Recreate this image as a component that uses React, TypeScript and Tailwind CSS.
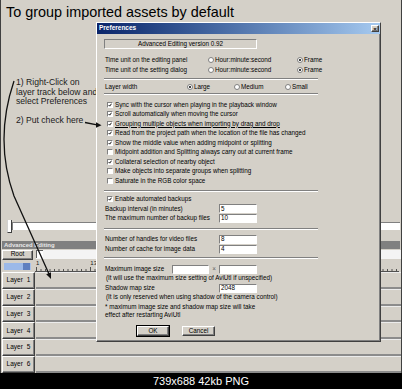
import React from 'react';

const sunken = 'border-t border-l border-t-[#808080] border-l-[#808080] border-r border-b border-r-white border-b-white';
const raised = 'border-t border-l border-t-white border-l-white border-r border-b border-r-[#404040] border-b-[#404040] shadow-[inset_-1px_-1px_0_#808080]';

const Radio = ({ on }: { on?: boolean }) => (
    <span className="w-[6px] h-[6px] rounded-full bg-white border border-[#808080] flex items-center justify-center shrink-0">
        {on && <span className="w-[2px] h-[2px] rounded-full bg-black" />}
    </span>
);

const Check = ({ on }: { on?: boolean }) => (
    <span className={`w-[6px] h-[6px] bg-white flex items-center justify-center shrink-0 ${sunken}`}>
        {on && (
            <svg width="4" height="4" viewBox="0 0 7 7">
                <path d="M1 3.5 L3 5.5 L6.2 1.2" stroke="black" strokeWidth="1.6" fill="none" />
            </svg>
        )}
    </span>
);

const Field = ({ value, w = 'w-[38px]' }: { value?: string; w?: string }) => (
    <span className={`h-[9px] bg-white flex items-center pl-[1px] leading-none ${w} ${sunken}`}>{value}</span>
);

const Sep = () => <div className="w-[214px] h-[2px] border-t border-[#808080] border-b border-b-white" />;

const options: [boolean, string][] = [
    [true, 'Sync with the cursor when playing in the playback window'],
    [true, 'Scroll automatically when moving the cursor'],
    [true, 'Grouping multiple objects when importing by drag and drop'],
    [true, 'Read from the project path when the location of the file has changed'],
    [true, 'Show the middle value when adding midpoint or splitting'],
    [false, 'Midpoint addition and Splitting always carry out at current frame'],
    [true, 'Collateral selection of nearby object'],
    [false, 'Make objects into separate groups when splitting'],
    [false, 'Saturate in the RGB color space'],
];

const ticks = Array.from({ length: 81 }, (_, i) => i);

function Preferences() {
    return (
        <div className="absolute left-[96px] top-[22px] w-[285px] h-[320px] bg-[#d4d0c8] border border-t-white border-l-white border-r-[#404040] border-b-[#404040] shadow-[inset_-1px_-1px_0_#808080] text-[6.3px] leading-none text-black">
            <div className="h-[11px] bg-linear-to-r from-[#0a246a] to-[#a6caf0] flex items-center justify-between pl-[2px] pr-[1px]">
                <span className="text-white font-bold text-[6.5px]">Preferences</span>
                <span className={`w-[8px] h-[7px] bg-[#d4d0c8] flex items-center justify-center text-[6px] font-bold ${raised}`}>×</span>
            </div>

            <div className="pl-[7px] flex flex-col">
                <div className={`mt-[5px] w-[153px] h-[10px] flex items-center justify-center ${sunken}`}>
                    Advanced Editing version 0.92
                </div>

                <div className="mt-[6px] grid grid-cols-[104px_89px_1fr] h-[10px] items-center">
                    <span className="pl-[1px]">Time unit on the editing panel</span>
                    <span className="flex items-center gap-[1px]"><Radio />Hour:minute:second</span>
                    <span className="flex items-center gap-[1px]"><Radio on />Frame</span>
                </div>
                <div className="grid grid-cols-[104px_89px_1fr] h-[10px] items-center">
                    <span className="pl-[1px]">Time unit of the setting dialog</span>
                    <span className="flex items-center gap-[1px]"><Radio />Hour:minute:second</span>
                    <span className="flex items-center gap-[1px]"><Radio on />Frame</span>
                </div>

                <div className="mt-[3px]"><Sep /></div>

                <div className="mt-[2px] grid grid-cols-[83px_47px_51px_1fr] h-[10px] items-center">
                    <span className="pl-[1px]">Layer width</span>
                    <span className="flex items-center gap-[1px]"><Radio on />Large</span>
                    <span className="flex items-center gap-[1px]"><Radio />Medium</span>
                    <span className="flex items-center gap-[1px]"><Radio />Small</span>
                </div>

                <div className="mt-[1px]"><Sep /></div>

                <div className="mt-[5px] flex flex-col">
                    {options.map(([on, label], i) => (
                        <div key={i} className="h-[9.5px] flex items-center gap-[2px] pl-[3px]">
                            <Check on={on} />
                            <span className={i === 2 ? 'underline decoration-black underline-offset-[1px]' : ''}>{label}</span>
                        </div>
                    ))}
                </div>

                <div className="mt-[4.5px]"><Sep /></div>

                <div className="mt-[2.5px] h-[9.5px] flex items-center gap-[2px] pl-[3px]">
                    <Check on />
                    <span>Enable automated backups</span>
                </div>
                <div className="h-[9.5px] grid grid-cols-[115px_1fr] items-center">
                    <span className="pl-[1px]">Backup interval (in minutes)</span>
                    <Field value="5" />
                </div>
                <div className="h-[9.5px] grid grid-cols-[115px_1fr] items-center">
                    <span className="pl-[1px]">The maximum number of backup files</span>
                    <Field value="10" />
                </div>

                <div className="mt-[4.5px]"><Sep /></div>

                <div className="mt-[4.5px] h-[10px] grid grid-cols-[115px_1fr] items-center">
                    <span className="pl-[1px]">Number of handles for video files</span>
                    <Field value="8" />
                </div>
                <div className="h-[10px] grid grid-cols-[115px_1fr] items-center">
                    <span className="pl-[1px]">Number of cache for image data</span>
                    <Field value="4" />
                </div>

                <div className="mt-[3px]"><Sep /></div>

                <div className="mt-[5px] h-[10px] flex items-center">
                    <span className="w-[68px] pl-[1px]">Maximum image size</span>
                    <Field w="w-[37px]" />
                    <span className="w-[10px] text-center text-[#606060]">×</span>
                    <Field />
                </div>
                <div className="h-[9px] flex items-center pl-[2px]">(It will use the maximum size setting of AviUtl if unspecified)</div>
                <div className="h-[10px] grid grid-cols-[115px_1fr] items-center">
                    <span className="pl-[1px]">Shadow map size</span>
                    <Field value="2048" />
                </div>
                <div className="h-[9px] flex items-center pl-[2px]">(It is only reserved when using shadow of the camera control)</div>
                <div className="mt-[1px] h-[8px] flex items-center pl-[1px]">* maximum image size and shadow map size will take</div>
                <div className="h-[8px] flex items-center pl-[1px]">effect after restarting AviUtl</div>

                <div className="mt-[7px] flex items-center pl-[33px] gap-[13px]">
                    <span className={`w-[32px] h-[10px] flex items-center justify-center outline outline-black ${raised}`}>OK</span>
                    <span className={`w-[33px] h-[10px] flex items-center justify-center ${raised}`}>Cancel</span>
                </div>
            </div>
        </div>
    );
}

export default function App() {
    const layers = [1, 2, 3, 4, 5, 6];

    return (
        <div className="relative w-[402px] h-[389px] bg-[#d4d0c8] flex flex-col overflow-hidden font-['Liberation_Sans',Arial,sans-serif] text-black">
            <div className="h-[373px] flex flex-col border-l border-r border-[#404040]">
                {/* caption + notes */}
                <div className="h-[215px] flex flex-col">
                    <div className="pt-[5px] pl-[5px] text-[14.4px] leading-none">To group imported assets by default</div>
                    <div className="mt-[59px] pl-[15px] text-[8.6px] leading-[9.3px] text-[#1a1a1a]">
                        <div>1) Right-Click on</div>
                        <div>layer track below and</div>
                        <div>select Preferences</div>
                        <div className="mt-[10px]">2) Put check here</div>
                    </div>
                </div>

                {/* slider */}
                <div className="h-[26px] flex items-start pt-[5px] pl-[6px] pr-[1px]">
                    <div className="w-[5px] h-[13px] bg-white border-r border-b border-[#404040] border-l border-l-[#d0d0d0]" />
                    <div className="flex-1 mt-[2px] h-[8px] bg-white border-t border-l border-[#808080]" />
                </div>

                {/* editor title strip */}
                <div className="h-[8px] mx-[1px] bg-[#808080] text-[#e8e8e8] text-[6px] font-bold leading-[8px] pl-[2px]">Advanced Editing</div>

                {/* root row */}
                <div className="h-[11px] flex items-center pl-[1px]">
                    <span className={`w-[31px] h-[10px] flex items-center justify-center text-[6.5px] leading-none ${raised}`}>Root</span>
                    <div className="ml-[3px] flex-1 h-[9px] bg-[#f4f4f4] flex items-start">
                        <span className="w-[7px] h-[8px] bg-white border-t border-l border-[#606060]" />
                    </div>
                </div>

                {/* ruler row */}
                <div className="h-[12px] flex">
                    <div className="w-[34px] pl-[3px] pt-[3px] flex">
                        <span className="w-[19px] h-[7px] bg-[#9cb9e8]" />
                        <span className="w-[8px] h-[7px] bg-[#5f7fbf] border-r border-[#a9c2ea]" />
                    </div>
                    <div className="flex-1 flex flex-col">
                        <div className="h-[7px] flex text-[6px] leading-[7px] text-[#202020]">
                            <span className="ml-[1px]">1</span>
                            <span className="ml-[51px]">13</span>
                        </div>
                        <svg width="364" height="5" className="block">
                            {ticks.map((i) => (
                                <line key={i} x1={1.5 + i * 4.5} x2={1.5 + i * 4.5} y1={i % 12 === 0 ? 0 : 2} y2={5} stroke="#303030" strokeWidth="0.8" />
                            ))}
                            <line x1="0" x2="364" y1="4.5" y2="4.5" stroke="#505050" strokeWidth="1" />
                        </svg>
                    </div>
                </div>

                {/* layers */}
                <div className="h-[101px] flex flex-col">
                    {layers.map((n) => (
                        <div key={n} className="flex-1 flex">
                            <span className={`ml-[1px] w-[33px] flex items-center justify-center gap-[4px] text-[6.5px] leading-none ${raised}`}>
                                <span>Layer</span>
                                <span>{n}</span>
                            </span>
                            <div className="ml-[1px] flex-1 border-b-2 border-[#8c8c8c] border-t border-t-[#ececec]" />
                        </div>
                    ))}
                </div>
            </div>

            <div className="h-[16px] bg-black flex items-center justify-center text-white text-[11px] leading-none">739x688 42kb PNG</div>

            <Preferences />

            {/* annotation pen strokes */}
            <svg className="absolute left-0 top-0 pointer-events-none" width="402" height="389">
                <path d="M14 81 Q -6 140 14 196 L 49 274" stroke="#111" strokeWidth="1.3" fill="none" />
                <polygon points="51,279 46.2,274.3 51,272.3" fill="#111" />
                <path d="M85 122.5 L 97 124.8" stroke="#111" strokeWidth="1.3" fill="none" />
                <polygon points="101.5,125.2 96,122.3 96,127.8" fill="#111" />
            </svg>
        </div>
    );
}
